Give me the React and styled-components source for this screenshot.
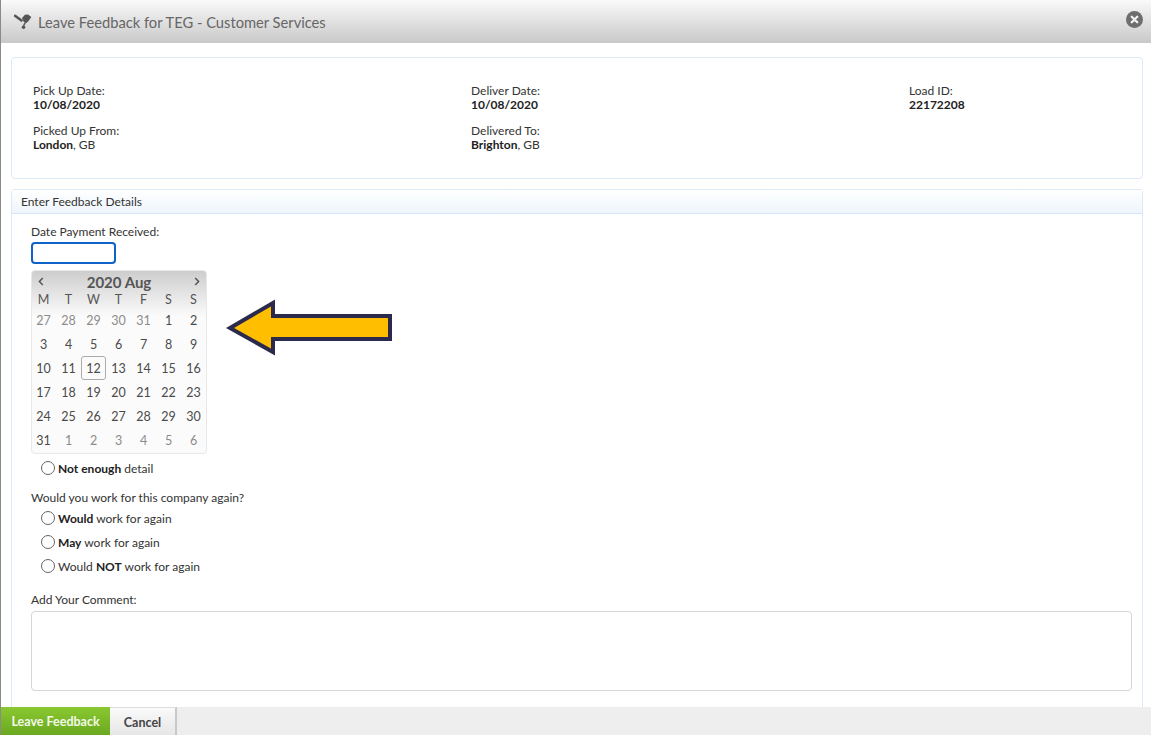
import React from "react";
import styled, { createGlobalStyle } from "styled-components";

const Global = createGlobalStyle`
  html, body { margin: 0; padding: 0; background: #fff; }
  * { box-sizing: border-box; }
  #root { height: 735px; overflow: hidden; }
`;

const Modal = styled.div`
  height: 735px;
  display: flex;
  flex-direction: column;
  border-left: 1px solid #8a8a8a;
  font-family: Lato, "Liberation Sans", sans-serif;
  font-size: 12px;
  color: #333;
`;
const Header = styled.header`
  height: 43px;
  flex: none;
  display: flex;
  align-items: center;
  padding: 0 8px 0 13px;
  background: linear-gradient(#fafafa, #e8e8e8 35%, #c9c9c9);
  font-size: 14.7px;
  color: #666;
`;
const HeaderTitle = styled.h1`
  flex: 1;
  margin: 0 0 0 6px;
  font: inherit;
`;
const Body = styled.main`
  flex: 1;
  min-height: 0;
  overflow: hidden;
  padding: 14px 8px 0 10px;
  display: flex;
  flex-direction: column;
  gap: 10px;
`;
const InfoCard = styled.section`
  height: 122px;
  flex: none;
  border: 1px solid #dbe9f8;
  border-radius: 4px;
  padding: 26px 21px 0;
  display: grid;
  grid-template-columns: repeat(3, 438px);
  grid-auto-rows: 40px;
`;
const Info = styled.div`
  line-height: 14px;
  color: #333;
`;
const Strong = styled.b`
  font-weight: 700;
  color: #222;
`;
const Panel = styled.section`
  flex: 1;
  border: 1px solid #dbe9f8;
  border-bottom: 0;
  border-radius: 4px 4px 0 0;
  min-height: 0;
`;
const PanelHead = styled.div`
  height: 24px;
  padding-left: 9px;
  display: flex;
  align-items: center;
  background: linear-gradient(#fff, #eef5fc);
  border-bottom: 1px solid #d5e5f7;
  color: #333;
`;
const PanelBody = styled.div`
  padding: 10px 10px 0 19px;
  position: relative;
`;
const Label = styled.div`
  line-height: 16px;
`;
const DateInput = styled.input`
  display: block;
  width: 85px;
  height: 22px;
  margin: 2px 0 6px;
  border: 2px solid #0f62c6;
  border-radius: 4px;
  background: #fff;
  outline: none;
`;
const Calendar = styled.div`
  width: 176px;
  height: 184px;
  margin-bottom: 2px;
  border: 1px solid #e8e8e8;
  border-radius: 4px;
  background: linear-gradient(#cdcdcd, #f4f4f4 38px, #fbfbfb 46px);
  color: #555;
`;
const CalTitle = styled.div`
  height: 21px;
  display: flex;
  align-items: center;
  justify-content: space-between;
  padding: 0 6px 0 6px;
  font-size: 15px;
  font-weight: 700;
  color: #555;
`;
const Chevron = styled.svg`
  flex: none;
`;
const CalGrid = styled.div`
  display: grid;
  grid-template-columns: repeat(7, 25px);
  grid-template-rows: 16px repeat(6, 24px);
  justify-content: start;
  margin-left: -1px;
`;
const Weekday = styled.div`
  display: flex;
  align-items: center;
  justify-content: center;
  font-size: 12.5px;
  padding-bottom: 2px;
`;
const Day = styled.div`
  display: flex;
  align-items: center;
  justify-content: center;
  font-size: 12.5px;
  color: ${(p) => (p.$muted ? "#8c8c8c" : "#4a4a4a")};
  border: ${(p) => (p.$today ? "1px solid #aaa" : "0")};
  border-radius: 3px;
`;
const RadioRow = styled.label`
  display: flex;
  align-items: center;
  height: 24px;
  padding-left: 10px;
  gap: 3px;
`;
const Radio = styled.span`
  width: 14px;
  height: 14px;
  border: 1px solid #666;
  border-radius: 50%;
  background: #fff;
  flex: none;
`;
const Question = styled(Label)`
  margin-top: 10px;
`;
const CommentLabel = styled(Label)`
  margin-top: 14px;
  margin-bottom: 3px;
`;
const Comment = styled.textarea`
  display: block;
  width: 100%;
  height: 80px;
  border: 1px solid #d6d6d6;
  border-radius: 4px;
  resize: none;
  background: #fff;
`;
const Arrow = styled.svg`
  position: absolute;
  left: 212px;
  top: 84px;
`;
const Footer = styled.footer`
  height: 28px;
  flex: none;
  display: flex;
  background: #eeeeee;
`;
const Button = styled.button`
  height: 28px;
  border: 0;
  padding: 1px 0 0;
  font-family: inherit;
  font-size: 12.5px;
  font-weight: 700;
  cursor: pointer;
`;
const GreenButton = styled(Button)`
  width: 109px;
  color: #f2f9e6;
  background: linear-gradient(#8ac831, #6aa820);
`;
const CancelButton = styled(Button)`
  width: 67px;
  color: #444;
  background: linear-gradient(#fafafa, #e6e6e6);
  border-right: 2px solid #c8c8c8;
  border-top: 1px solid #ddd;
`;
const Close = styled.svg`
  display: block;
  margin-bottom: 5px;
`;

const weekdays = ["M", "T", "W", "T", "F", "S", "S"];
const days = [
  ...[27, 28, 29, 30, 31].map((d) => ({ d, m: true })),
  ...Array.from({ length: 31 }, (_, i) => ({ d: i + 1 })),
  ...[1, 2, 3, 4, 5, 6].map((d) => ({ d, m: true })),
];

export default function App() {
  return (
    <>
      <Global />
      <Modal>
        <Header>
          <svg width="18" height="16" viewBox="0 0 18 16" aria-hidden="true">
            <path d="M1 1.8 L7.5 6.5" stroke="#555" strokeWidth="2.6" strokeLinecap="round" />
            <path d="M8 4 L11 0.8 L14 0.5 L17.3 3 L15 6.5 L12.5 9 L9.5 7.5 Z" fill="#555" />
            <circle cx="9.5" cy="13.2" r="1.8" fill="#555" />
            <path d="M9.5 12 L11.5 8" stroke="#555" strokeWidth="1.6" />
          </svg>
          <HeaderTitle>Leave Feedback for TEG - Customer Services</HeaderTitle>
          <Close width="17" height="17" viewBox="0 0 16 16" aria-label="Close">
            <circle cx="8" cy="8" r="8" fill="#6e6e6e" />
            <path d="M5.4 5.4 L10.6 10.6 M10.6 5.4 L5.4 10.6" stroke="#f2f2f2" strokeWidth="2.2" strokeLinecap="round" />
          </Close>
        </Header>
        <Body>
          <InfoCard>
            <Info>Pick Up Date:<br /><Strong>10/08/2020</Strong></Info>
            <Info>Deliver Date:<br /><Strong>10/08/2020</Strong></Info>
            <Info>Load ID:<br /><Strong>22172208</Strong></Info>
            <Info>Picked Up From:<br /><Strong>London</Strong>, GB</Info>
            <Info>Delivered To:<br /><Strong>Brighton</Strong>, GB</Info>
          </InfoCard>
          <Panel>
            <PanelHead>Enter Feedback Details</PanelHead>
            <PanelBody>
              <Label>Date Payment Received:</Label>
              <DateInput aria-label="Date Payment Received" />
              <Calendar>
                <CalTitle>
                  <Chevron width="6" height="9" viewBox="0 0 6 9" aria-hidden="true">
                    <path d="M4.8 1 L1.4 4.5 L4.8 8" fill="none" stroke="#555" strokeWidth="1.5" />
                  </Chevron>
                  <span>2020 Aug</span>
                  <Chevron width="6" height="9" viewBox="0 0 6 9" aria-hidden="true">
                    <path d="M1.2 1 L4.6 4.5 L1.2 8" fill="none" stroke="#555" strokeWidth="1.5" />
                  </Chevron>
                </CalTitle>
                <CalGrid>
                  {weekdays.map((w, i) => (
                    <Weekday key={i}>{w}</Weekday>
                  ))}
                  {days.map((x, i) => (
                    <Day key={i} $muted={x.m} $today={!x.m && x.d === 12}>{x.d}</Day>
                  ))}
                </CalGrid>
              </Calendar>
              <RadioRow><Radio /><span><Strong>Not enough</Strong> detail</span></RadioRow>
              <Question>Would you work for this company again?</Question>
              <RadioRow><Radio /><span><Strong>Would</Strong> work for again</span></RadioRow>
              <RadioRow><Radio /><span><Strong>May</Strong> work for again</span></RadioRow>
              <RadioRow><Radio /><span>Would <Strong>NOT</Strong> work for again</span></RadioRow>
              <CommentLabel>Add Your Comment:</CommentLabel>
              <Comment aria-label="Add Your Comment" />
              <Arrow width="170" height="60" viewBox="0 0 170 60" aria-hidden="true">
                <path d="M6 30 L49 5 L49 18 L166 18 L166 41 L49 41 L49 54 Z" fill="#ffbf00" stroke="#2b2a4c" strokeWidth="4" />
              </Arrow>
            </PanelBody>
          </Panel>
        </Body>
        <Footer>
          <GreenButton>Leave Feedback</GreenButton>
          <CancelButton>Cancel</CancelButton>
        </Footer>
      </Modal>
    </>
  );
}
